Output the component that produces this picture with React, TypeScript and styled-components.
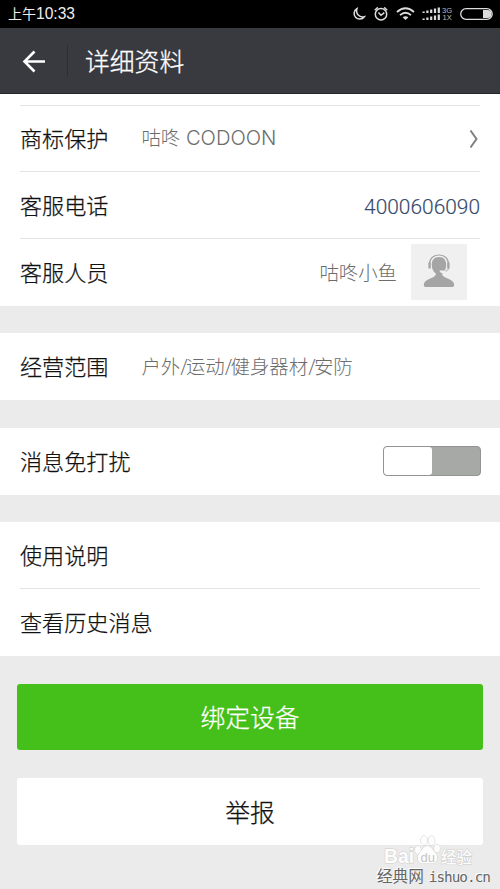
import React from 'react';
import styled, { createGlobalStyle } from 'styled-components';

const GlobalStyle = createGlobalStyle`
  * { box-sizing: border-box; }
  body { margin: 0; background: #ebebeb; }
`;

const Screen = styled.div`
  position: relative;
  width: 500px;
  height: 889px;
  overflow: hidden;
  display: flex;
  flex-direction: column;
  background: #ebebeb;
  color: #111;
  font-family: Roboto, 'Noto Sans CJK SC', sans-serif;
`;

const StatusBar = styled.header`
  flex: none;
  height: 28px;
  padding: 0 7px 0 8px;
  display: flex;
  align-items: center;
  justify-content: space-between;
  background: #000;
  color: #eee;
  font-size: 14px;
`;

const Clock = styled.span`
  margin-top: -3px;
  span { font-family: 'Liberation Sans', sans-serif; font-size: 15.6px; }
`;

const StatusIcons = styled.svg`
  display: block;
  width: 144px;
  height: 28px;
`;

const TitleBar = styled.nav`
  flex: none;
  height: 66px;
  padding-left: 22px;
  display: flex;
  align-items: center;
  background: #393a3f;
  border-bottom: 1px solid #242529;
  color: #fff;
`;

const BackIcon = styled.svg`
  width: 24px;
  height: 24px;
`;

const BarDivider = styled.span`
  width: 1px;
  height: 32px;
  margin: 0 17px 0 21px;
  background: #2d2e32;
`;

const Title = styled.h1`
  margin: 0;
  padding-top: 4px;
  font-size: 24.8px;
  line-height: 36px;
  font-weight: 300;
  -webkit-text-stroke: 0.3px currentColor;
`;

const Section = styled.section<{ $gap: number }>`
  flex: none;
  margin-bottom: ${(p) => p.$gap}px;
  padding: 0 20px;
  background: #fff;
`;

const Row = styled.div<{ $height?: number; $line?: boolean }>`
  height: ${(p) => p.$height ?? 67}px;
  display: flex;
  align-items: center;
  border-bottom: ${(p) => (p.$line ? '1px solid #e4e4e4' : '0')};
`;

const Label = styled.span`
  padding-top: 1px;
  font-size: 22.1px;
  line-height: 32px;
  white-space: nowrap;
  font-weight: 300;
  -webkit-text-stroke: 0.25px currentColor;
`;

const Value = styled.span<{ $end?: boolean; $raised?: boolean }>`
  padding-top: ${(p) => (p.$raised ? 0 : 2)}px;
  margin-left: ${(p) => (p.$end ? 'auto' : '33px')};
  font-size: 19.4px;
  line-height: 28px;
  font-weight: 300;
  color: #6c6c6c;
  white-space: nowrap;
`;

const Latin = styled.span`
  margin-left: 1px;
  font-family: Inter, sans-serif;
  font-size: 20.2px;
`;

const Slash = styled.span`
  letter-spacing: -1.9px;
`;

const Phone = styled.a`
  margin-left: auto;
  padding-top: 3px;
  font-size: 20.9px;
  font-weight: 300;
  color: #35496b;
  -webkit-text-stroke: 0.15px currentColor;
`;

const Chevron = styled.svg`
  width: 12px;
  height: 22px;
  margin-left: auto;
`;

const Avatar = styled.svg`
  width: 56px;
  height: 56px;
  margin: -1px 13px 0 14px;
  background: #f0f0f0;
`;

const Toggle = styled.div`
  width: 98px;
  height: 30px;
  margin: -1px -1px 0 auto;
  border: 1.5px solid #929492;
  border-radius: 4px;
  background: #a6a9a6;
  overflow: hidden;
`;

const Knob = styled.div`
  width: 48px;
  height: 100%;
  background: #fff;
  border-radius: 3px;
`;

const Actions = styled.div`
  display: flex;
  flex-direction: column;
  gap: 28px;
  padding: 0 17px 0 17px;
`;

const Button = styled.button<{ $primary?: boolean }>`
  height: ${(p) => (p.$primary ? 66 : 67)}px;
  padding: 0 0 2px;
  border: 0;
  border-radius: 3px;
  background: ${(p) => (p.$primary ? '#45c01a' : '#fff')};
  color: ${(p) => (p.$primary ? '#fff' : '#111')};
  font-family: inherit;
  font-size: 24.8px;
  font-weight: 300;
  -webkit-text-stroke: 0.25px currentColor;
`;

const Watermark = styled.div`
  position: absolute;
  right: 7px;
  bottom: 0;
  width: 118px;
  height: 56px;
`;

const Brand = styled.svg`
  position: absolute;
  left: 0;
  top: 0;
  width: 118px;
  height: 36px;
`;

const Site = styled.div`
  position: absolute;
  left: 2px;
  bottom: 2px;
  font-family: 'Noto Sans CJK SC', sans-serif;
  font-size: 15.6px;
  line-height: 20px;
  color: #666;
  text-shadow: -1px -1px 0 #fff;
  white-space: nowrap;
  span { font-family: 'DejaVu Sans Mono', monospace; font-size: 14.2px; margin-left: 5px; letter-spacing: -0.9px; }
`;

const bars = [0, 1, 2, 3, 4];
const scope = ['户外', '运动', '健身器材', '安防'];

export default function App() {
  return (
    <>
      <GlobalStyle />
      <Screen>
        <StatusBar>
          <Clock>上午<span>10:33</span></Clock>
          <StatusIcons viewBox="349 0 144 28" fill="none" stroke="#ddd" strokeWidth="1.5">
            <path d="M357 8.600a5.600 5.600 0 1 0 7.300 8.100c-4.800 1.400-9-3-7.300-8.100z" />
            <circle cx="381" cy="14.200" r="5.700" />
            <path d="M374.800 10.200l3-2.800M387.200 10.200l-3-2.800M378.400 12.600l2.600 2.700 3.300-2.700" />
            <path d="M397 12q8.500-7.400 17 0M400 15.100q5.500-4.700 11 0" strokeWidth="1.900" />
            <path d="M402.600 17.200q2.900-2 5.800 0l-2.900 2.800z" fill="#ddd" stroke="none" />
            {bars.map((i) => (
              <React.Fragment key={i}>
                <rect x={422.5 + i * 3.8} y={11.5 - i} width="2.2" height={1.5 + i} fill="#ddd" stroke="none" />
                <rect x={422.5 + i * 3.8} y={18.5 - i} width="2.2" height={1.5 + i} fill="#ddd" stroke="none" />
              </React.Fragment>
            ))}
            <g fill="#bbb" stroke="none" fontSize="7.600" fontFamily="'Liberation Sans', sans-serif">
              <text x="442" y="12.600">3G</text>
              <text x="442.500" y="19.800">1X</text>
            </g>
            <rect x="460.700" y="8.700" width="31.500" height="10.600" rx="5.300" strokeWidth="1.300" />
            <path d="M483 10h4.500a4 4 0 0 1 0 8H483z" fill="#ddd" stroke="none" />
          </StatusIcons>
        </StatusBar>

        <TitleBar>
          <BackIcon viewBox="0 0 24 24" fill="none" stroke="#fff" strokeWidth="2.600">
            <path d="M23 12.500H2.500M12.500 2.500l-10 10 10 10" />
          </BackIcon>
          <BarDivider />
          <Title>详细资料</Title>
        </TitleBar>

        <Section $gap={27}>
          <Row $height={12} $line />
          <Row $height={66} $line>
            <Label>商标保护</Label>
            <Value $raised>咕咚 <Latin>CODOON</Latin></Value>
            <Chevron viewBox="0 0 12 22" fill="none" stroke="#808080" strokeWidth="2">
              <path d="M2.500 2.500l6 8.500-6 8.500" />
            </Chevron>
          </Row>
          <Row $line>
            <Label>客服电话</Label>
            <Phone>4000606090</Phone>
          </Row>
          <Row>
            <Label>客服人员</Label>
            <Value $end>咕咚小鱼</Value>
            <Avatar viewBox="0 0 56 56">
              <path d="M28 13c5 0 7.200 3 7.200 8 0 4-1.500 6.500-4 8.500v1.500c3 4 12 4 12 10 0 1.200-.6 2-2 2H14.800c-1.400 0-2-.8-2-2 0-6 9-6 12-10v-1.500c-2.500-2-4-4.500-4-8.500 0-5 2.200-8 7.200-8z" fill="#a5a5a5" />
              <path d="M18.500 20c0-12 19-12 19 0" fill="none" stroke="#a5a5a5" strokeWidth="1.200" />
              <path d="M18.600 18.500v6M37.400 18.500v6" stroke="#a5a5a5" strokeWidth="2.400" />
              <path d="M37.400 24c0 2-1.500 3-3 3.200" fill="none" stroke="#a5a5a5" />
              <path d="M28.500 26.500h6c-.5 3.500-5.500 3.500-6 0z" fill="#f0f0f0" />
            </Avatar>
          </Row>
        </Section>

        <Section $gap={28}>
          <Row>
            <Label>经营范围</Label>
            <Value>
              {scope.map((item, i) => (
                <React.Fragment key={item}>{i > 0 && <Slash>/</Slash>}{item}</React.Fragment>
              ))}
            </Value>
          </Row>
        </Section>

        <Section $gap={27}>
          <Row>
            <Label>消息免打扰</Label>
            <Toggle role="switch" aria-checked={false}><Knob /></Toggle>
          </Row>
        </Section>

        <Section $gap={28}>
          <Row $line><Label>使用说明</Label></Row>
          <Row><Label>查看历史消息</Label></Row>
        </Section>

        <Actions>
          <Button $primary>绑定设备</Button>
          <Button>举报</Button>
        </Actions>

        <Watermark>
          <Brand viewBox="375 833 118 36" fill="#fdfdfd" stroke="#cdcdcd" strokeWidth="1" paintOrder="stroke">
            <text x="384" y="863" fontFamily="'Liberation Sans', sans-serif" fontWeight="700" fontSize="20" textLength="30" lengthAdjust="spacingAndGlyphs">Bai</text>
            <ellipse cx="418" cy="850" rx="3" ry="4" />
            <ellipse cx="424" cy="840.500" rx="3.200" ry="4.500" />
            <ellipse cx="431.500" cy="840.500" rx="3.200" ry="4.500" />
            <ellipse cx="437" cy="848.500" rx="3" ry="4" />
            <path d="M427.500 846c4 0 5 4 8 7s2 10.500-3 10.500h-10c-5 0-6-7-3-10.500s4-7 8-7z" />
            <text x="420.500" y="861.500" fontFamily="'Liberation Sans', sans-serif" fontSize="13" fill="#c4c4c4" stroke="none">du</text>
            <text x="441" y="862.500" fontFamily="'Noto Sans CJK SC', sans-serif" fontSize="15.500" fontWeight="500">经验</text>
          </Brand>
          <Site>经典网<span>ishuo.cn</span></Site>
        </Watermark>
      </Screen>
    </>
  );
}
